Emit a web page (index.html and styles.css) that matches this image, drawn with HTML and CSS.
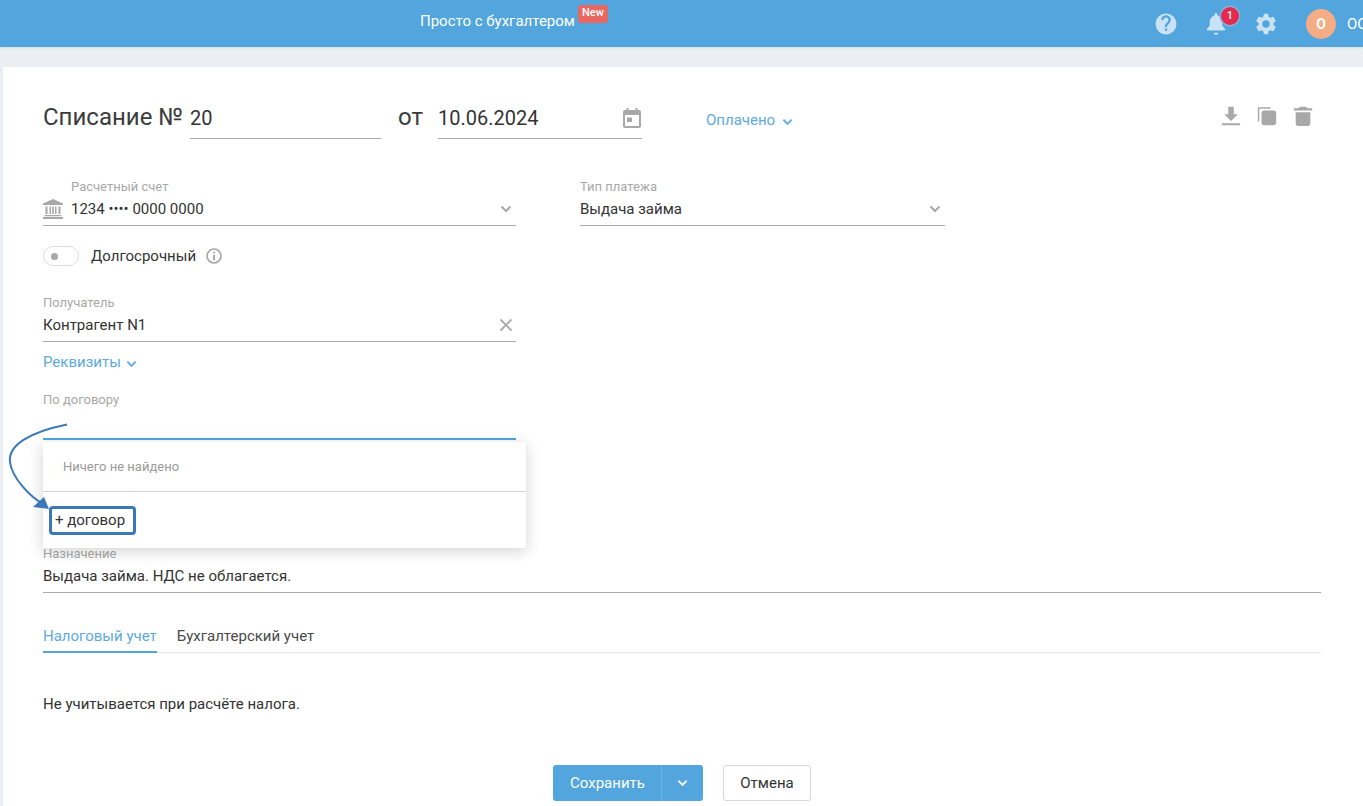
FILE: index.html
```html
<!DOCTYPE html>
<html lang="ru">
<head>
<meta charset="utf-8">
<title>Списание</title>
<link rel="stylesheet" href="styles.css">
</head>
<body>
<header class="topbar">
  <div class="promo">Просто с бухгалтером<span class="new">New</span></div>
  <div class="top-icons">
    <svg class="ti help" viewBox="0 0 24 24"><path fill="#c9e2f6" fill-rule="evenodd" d="M12 1.500a10.500 10.500 0 1 0 0 21 10.500 10.500 0 0 0 0-21zm1.200 17.300h-2.400v-2.400h2.400zm2.400-7.900l-1.050 1.100c-.85.850-1.350 1.500-1.350 3.100h-2.400v-.6c0-1.300.5-2.500 1.350-3.350l1.500-1.500c.45-.45.7-1 .7-1.650a2.400 2.400 0 0 0-4.800 0H7.200a4.800 4.800 0 0 1 9.600 0c0 1.050-.45 2.050-1.200 2.800z"/></svg>
    <div class="bell">
      <svg class="ti" viewBox="0 0 24 24"><path fill="#c9e2f6" d="M12 23c1.300 0 2.300-1 2.300-2.200H9.700C9.700 22 10.700 23 12 23zm9-4.500v-1.800l-2.700-3V9.500c0-3-2.200-5.300-4.800-6V2.500a1.500 1.500 0 0 0-3 0v1c-2.600.7-4.800 3-4.800 6v4.200L3 16.700v1.800h18z"/></svg>
      <span class="badge">1</span>
    </div>
    <svg class="ti gear" viewBox="0 0 24 24"><path fill="#c9e2f6" fill-rule="evenodd" d="M19.400 13a7.600 7.600 0 0 0 0-2l2.200-1.700a.5.5 0 0 0 .1-.65l-2.100-3.600a.5.5 0 0 0-.63-.22l-2.600 1a7.600 7.600 0 0 0-1.750-1l-.4-2.750A.5.500 0 0 0 13.700 1.700H10.300a.5.500 0 0 0-.5.420l-.4 2.750a7.600 7.600 0 0 0-1.750 1l-2.600-1a.5.500 0 0 0-.62.220l-2.100 3.600a.5.500 0 0 0 .12.650L4.600 11a7.600 7.600 0 0 0 0 2l-2.200 1.700a.5.500 0 0 0-.12.650l2.100 3.600c.13.220.39.300.62.220l2.600-1c.54.410 1.120.750 1.750 1l.4 2.750c.4.240.25.420.5.420h3.400c.25 0 .46-.18.5-.42l.4-2.750a7.600 7.600 0 0 0 1.750-1l2.600 1c.23.080.5 0 .63-.22l2.100-3.600a.5.500 0 0 0-.12-.65zM12 15.700a3.700 3.700 0 1 1 0-7.400 3.700 3.700 0 0 1 0 7.400z"/></svg>
    <div class="avatar">O</div>
    <div class="user">ООО</div>
  </div>
</header>

<main class="card">
  <div class="title-row">
    <span class="title">Списание №</span>
    <div class="title-input num">20</div>
    <span class="title from">от</span>
    <div class="title-input date">10.06.2024
      <svg class="cal" viewBox="0 0 18 20"><path fill="#a8a8a8" fill-rule="evenodd" d="M3.500 0h2v2h7V0h2v2H16a2 2 0 0 1 2 2v14a2 2 0 0 1-2 2H2a2 2 0 0 1-2-2V4a2 2 0 0 1 2-2h1.500zM2 7v10.500c0 .3.200.5.5.5h13c.3 0 .5-.2.5-.5V7zM4 9.500h5V14H4z"/></svg>
    </div>
    <a class="status">Оплачено
      <svg class="chev" viewBox="0 0 12 8"><path d="M1.500 1.500L6 6l4.500-4.500" fill="none" stroke="#5eaadf" stroke-width="2"/></svg>
    </a>
    <div class="actions">
      <svg class="act" viewBox="0 0 24 24"><path fill="#a8a8a8" d="M9 2h6v8h4.500L12 17.500 4.500 10H9zM2 20h20v2H2z"/></svg>
      <svg class="act" viewBox="0 0 24 24"><path fill="#a8a8a8" d="M2 2.500h14v1.600H3.600V18H2zM9 6h10a3 3 0 0 1 3 3v10a3 3 0 0 1-3 3H9a3 3 0 0 1-3-3V9a3 3 0 0 1 3-3z"/></svg>
      <svg class="act" viewBox="0 0 24 24"><path fill="#a8a8a8" d="M8.500 2h7L17 3.500h5V6H2V3.500h5zM4 8h16v12a3 3 0 0 1-3 3H7a3 3 0 0 1-3-3z"/></svg>
    </div>
  </div>

  <div class="field-row">
    <div class="field narrow">
      <div class="label indent">Расчетный счет</div>
      <div class="value">
        <svg class="bank" viewBox="0 0 20 20"><path fill="#a8a8a8" d="M10 0l10 4.500V6H0V4.500zM2.500 7.500h2v7.500h-2zM6.500 7.500h1.500v7.500H6.500zM9.200 7.500h1.600v7.500H9.200zM12 7.500h1.500v7.500H12zM15.500 7.500h2v7.500h-2zM1.500 16h17v1.300h-17zM0 18h20v2H0z"/></svg>
        <span class="grow">1234 •••• 0000 0000</span>
        <svg class="chev-g" viewBox="0 0 12 8"><path d="M1.500 1.500L6 6l4.500-4.500" fill="none" stroke="#a8a8a8" stroke-width="2"/></svg>
      </div>
    </div>
    <div class="field type">
      <div class="label">Тип платежа</div>
      <div class="value">
        <span class="grow">Выдача займа</span>
        <svg class="chev-g" viewBox="0 0 12 8"><path d="M1.500 1.500L6 6l4.500-4.500" fill="none" stroke="#a8a8a8" stroke-width="2"/></svg>
      </div>
    </div>
  </div>

  <div class="toggle-row">
    <span class="toggle"><i></i></span>
    <span>Долгосрочный</span>
    <svg class="info" viewBox="0 0 16 16"><circle cx="8" cy="8" r="7" fill="none" stroke="#a8a8a8" stroke-width="1.700"/><path fill="#a8a8a8" d="M7 3.800h2v1.800H7zM7 7h2v5.200H7z"/></svg>
  </div>

  <div class="field narrow recipient">
    <div class="label">Получатель</div>
    <div class="value">
      <span class="grow">Контрагент N1</span>
      <svg class="clear" viewBox="0 0 14 14"><path d="M1.500 1.500l11 11M12.500 1.500l-11 11" fill="none" stroke="#a8a8a8" stroke-width="1.800"/></svg>
    </div>
  </div>

  <a class="details">Реквизиты
    <svg class="chev" viewBox="0 0 12 8"><path d="M1.500 1.500L6 6l4.500-4.500" fill="none" stroke="#5eaadf" stroke-width="2"/></svg>
  </a>

  <div class="field narrow contract">
    <div class="label">По договору</div>
    <div class="contract-input"></div>
    <div class="dropdown">
      <div class="empty">Ничего не найдено</div>
      <div class="add"><span class="add-box">+ договор</span></div>
    </div>
    <svg class="arrow" viewBox="5 420 70 95"><path d="M67 424.500C30 432 8 445 10 462c2 16 20 35 34 42.500" fill="none" stroke="#3a78b8" stroke-width="2"/><path d="M49 509L33 507 44 497z" fill="#3a78b8"/></svg>
  </div>

  <div class="field purpose">
    <div class="label">Назначение</div>
    <div class="value"><span class="grow">Выдача займа. НДС не облагается.</span></div>
  </div>

  <nav class="tabs">
    <span class="tab active">Налоговый учет</span>
    <span class="tab">Бухгалтерский учет</span>
  </nav>

  <p class="note">Не учитывается при расчёте налога.</p>

  <div class="buttons">
    <div class="save">
      <span class="save-main">Сохранить</span>
      <span class="save-more"><svg class="chev-w" viewBox="0 0 12 8"><path d="M1.500 1.500L6 6l4.500-4.500" fill="none" stroke="#fff" stroke-width="2"/></svg></span>
    </div>
    <span class="cancel">Отмена</span>
  </div>
</main>
</body>
</html>
```
FILE: styles.css
```css
* { box-sizing: border-box; }
html, body { margin: 0; height: 100%; overflow: hidden; }
body {
  background: #ebeff3;
  font-family: Roboto, "Liberation Sans", sans-serif;
  font-size: 15px;
  color: #333;
  width: 1363px;
  height: 806px;
}
.topbar {
  height: 47px;
  background: #52a5dd;
  display: flex;
  align-items: center;
  color: #fff;
  box-shadow: 0 1px 2px rgba(0,0,0,.08);
}
.promo {
  margin: 0 0 5px 420px;
  font-size: 15px;
  line-height: 18px;
  display: flex;
  position: relative;
}
.new {
  position: absolute;
  left: 158px;
  top: -7px;
  width: 30px;
  height: 18px;
  background: #e96661;
  border-radius: 3px;
  font-size: 11px;
  font-weight: 500;
  text-align: center;
  line-height: 16px;
}
.top-icons {
  margin-left: auto;
  display: flex;
  align-items: center;
}
.ti { width: 24px; height: 24px; display: block; }
.help { margin-right: 26px; }
.bell { position: relative; margin-right: 26px; }
.badge {
  position: absolute;
  left: 17px;
  top: -5px;
  width: 18px;
  height: 18px;
  border-radius: 50%;
  background: #e5294f;
  box-shadow: 0 0 0 1.500px #7fb6de;
  font-size: 11px;
  font-weight: 500;
  line-height: 18px;
  text-align: center;
  color: #fff;
}
.gear { margin-right: 28px; }
.avatar {
  width: 30px;
  height: 30px;
  border-radius: 50%;
  background: #f4ad85;
  font-weight: 700;
  font-size: 14px;
  line-height: 30px;
  text-align: center;
  color: #fff;
}
.user { margin-left: 11px; width: 16px; overflow: hidden; white-space: nowrap; font-size: 15px; }

.card {
  margin: 20px 0 0 3px;
  height: 740px;
  background: #fff;
  padding: 31px 42px 0 40px;
  position: relative;
}
.title-row { display: flex; align-items: flex-start; height: 41px; }
.title { font-size: 24px; line-height: 38px; color: #3c3c3c; }
.title-input {
  font-size: 20px;
  height: 41px;
  line-height: 40px;
  border-bottom: 1px solid #ababab;
  position: relative;
}
.num { width: 191px; margin-left: 7px; }
.from { margin-left: 17px; }
.date { width: 204px; margin-left: 15px; }
.cal { position: absolute; right: 1px; top: 10px; width: 18px; height: 20px; }
.status {
  margin-left: 64px;
  margin-top: 13px;
  font-size: 15px;
  color: #5eaadf;
  display: flex;
  align-items: center;
  gap: 7px;
  height: 18px;
}
.chev { width: 11px; height: 8px; margin-top: 3px; }
.actions { margin-left: auto; margin-right: 7px; margin-top: 7px; display: flex; gap: 14px; }
.act { width: 22px; height: 22px; display: block; }

.field-row { display: flex; gap: 64px; margin-top: 41px; }
.field { display: block; }
.narrow { width: 473px; }
.type { width: 365px; }
.label {
  font-size: 13px;
  line-height: 14px;
  color: #a8a8a8;
}
.indent { padding-left: 28px; }
.value {
  display: flex;
  align-items: center;
  height: 31px;
  padding-bottom: 3px;
  margin-top: 1px;
  border-bottom: 1px solid #ababab;
  font-size: 15px;
  color: #333;
}
.grow { flex: 1; }
.bank { width: 20px; height: 20px; margin-right: 8px; display: block; }
.chev-g { width: 12px; height: 8px; margin-right: 4px; }
.clear { width: 14px; height: 14px; margin-right: 3px; }

.toggle-row {
  display: flex;
  align-items: center;
  height: 20px;
  margin-top: 20px;
  font-size: 15px;
}
.toggle {
  width: 36px;
  height: 20px;
  border: 1px solid #dcdcdc;
  border-radius: 10px;
  margin-right: 12px;
  display: flex;
  align-items: center;
  padding-left: 7px;
}
.toggle i { width: 7px; height: 7px; border-radius: 50%; background: #a8a8a8; }
.info { width: 16px; height: 16px; margin-left: 10px; }

.recipient { margin-top: 30px; }
.details {
  display: flex;
  align-items: center;
  gap: 5px;
  margin-top: 11px;
  height: 18px;
  color: #5eaadf;
  font-size: 15px;
}

.contract { position: relative; margin-top: 22px; }
.contract-input { height: 33px; border-bottom: 2px solid #52a5dd; }
.dropdown {
  position: absolute;
  left: 0;
  top: 49px;
  width: 483px;
  height: 106px;
  background: #fff;
  box-shadow: 0 3px 14px rgba(0,0,0,.18);
  z-index: 2;
}
.empty {
  height: 50px;
  padding: 17px 0 0 20px;
  line-height: 15px;
  font-size: 13px;
  color: #9a9a9a;
  border-bottom: 1px solid #d4d4d4;
}
.add { padding: 14px 0 0 6px; }
.add-box {
  display: inline-block;
  width: 87px;
  height: 29px;
  border: 3px solid #3a78b8;
  border-radius: 4px;
  padding-left: 3px;
  line-height: 23px;
  font-size: 15px;
  color: #333;
}
.arrow {
  position: absolute;
  left: -38px;
  top: 27px;
  width: 70px;
  height: 95px;
  z-index: 3;
}
.purpose { margin-top: 107px; }
.tabs {
  display: flex;
  gap: 20px;
  margin-top: 25px;
  height: 35px;
  border-bottom: 1px solid #e6e6e6;
}
.tab { line-height: 36px; height: 35px; font-size: 15px; color: #4a4a4a; }
.tab.active { color: #5eaadf; border-bottom: 2px solid #52a5dd; }
.note { margin: 42px 0 0; line-height: 18px; font-size: 15px; color: #333; }
.buttons {
  display: flex;
  justify-content: center;
  gap: 20px;
  margin-top: 52px;
}
.save {
  display: flex;
  height: 36px;
  background: #52a5dd;
  border-radius: 3px;
  color: #fff;
  font-size: 15px;
  line-height: 36px;
  font-weight: 400;
}
.save-main { width: 109px; text-align: center; padding-left: 1px; border-right: 1px solid #6db4e4; }
.save-more { width: 41px; display: flex; align-items: center; justify-content: center; }
.chev-w { width: 11px; height: 8px; }
.cancel {
  width: 88px;
  height: 36px;
  border: 1px solid #d8d8d8;
  border-radius: 3px;
  text-align: center;
  line-height: 34px;
  font-size: 15px;
  color: #333;
}
```
